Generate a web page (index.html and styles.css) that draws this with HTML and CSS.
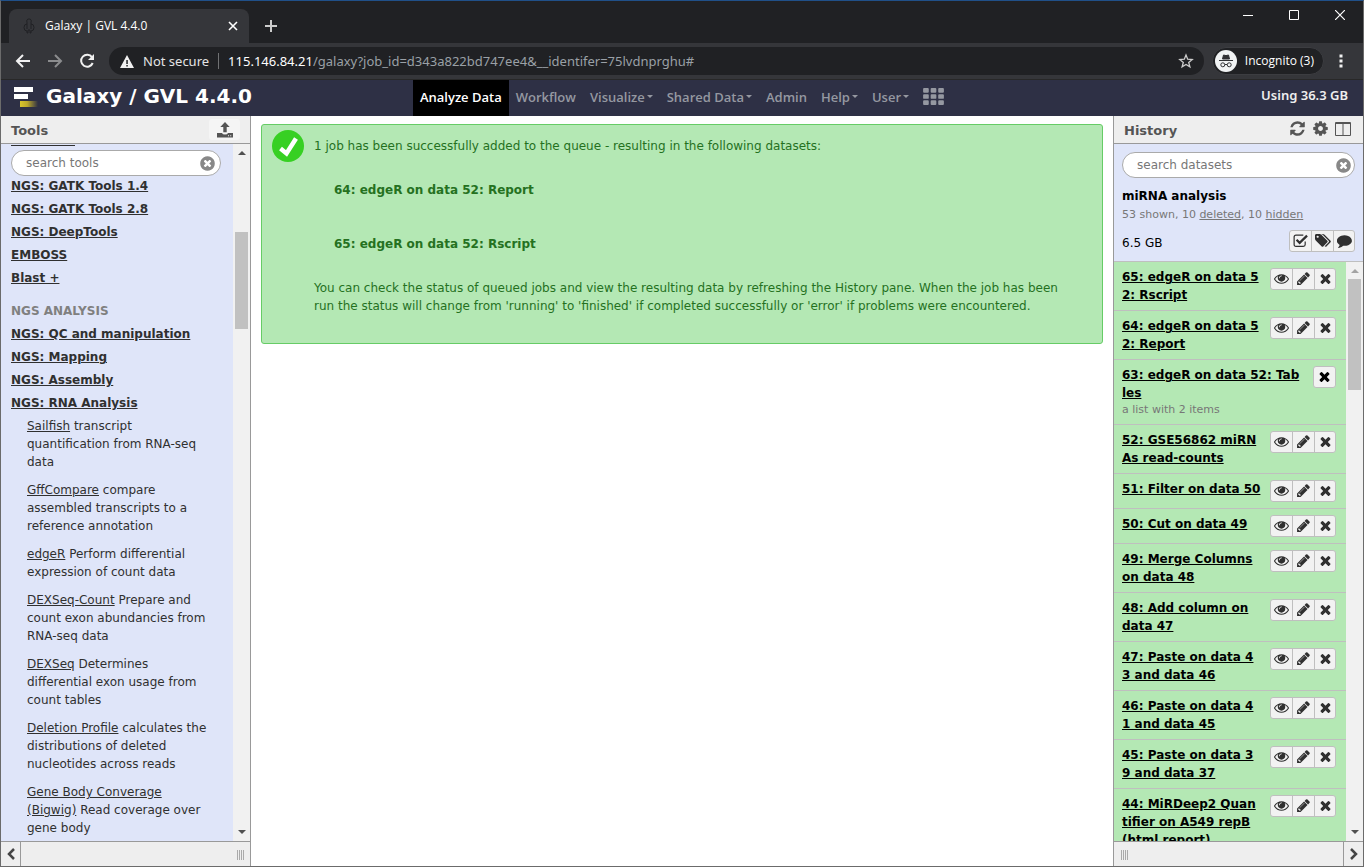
FILE: index.html
```html
<!DOCTYPE html>
<html lang="en">
<head>
<meta charset="utf-8">
<title>Galaxy | GVL 4.4.0</title>
<link rel="stylesheet" href="styles.css">
</head>
<body>
<svg class="defs" aria-hidden="true">
  <symbol id="eye" viewBox="0 0 1792 1792"><path d="M1664 960q-152-236-381-353 61 104 61 225 0 185-131.5 316.5t-316.5 131.5-316.5-131.5-131.5-316.5q0-121 61-225-229 117-381 353 133 205 333.5 326.5t434.5 121.5 434.5-121.5 333.5-326.5zm-720-384q0-20-14-34t-34-14q-125 0-214.5 89.5t-89.5 214.5q0 20 14 34t34 14 34-14 14-34q0-86 61-147t147-61q20 0 34-14t14-34zm848 384q0 34-20 69-140 230-376.5 368.5t-499.5 138.5-499.5-139-376.5-368q-20-35-20-69t20-69q140-229 376.5-368t499.5-139 499.5 139 376.5 368q20 35 20 69z"/></symbol>
  <symbol id="pencil" viewBox="0 0 1792 1792"><path d="M491 1536l91-91-235-235-91 91v107h128v128h107zm523-928q0-22-22-22-10 0-17 7l-542 542q-7 7-7 17 0 22 22 22 10 0 17-7l542-542q7-7 7-17zm-54-192l416 416-832 832h-416v-416zm683 96q0 53-37 90l-166 166-416-416 166-165q36-38 90-38 53 0 91 38l235 234q37 39 37 91z"/></symbol>
  <symbol id="times" viewBox="0 0 1792 1792"><path d="M1490 1322q0 40-28 68l-136 136q-28 28-68 28t-68-28l-294-294-294 294q-28 28-68 28t-68-28l-136-136q-28-28-28-68t28-68l294-294-294-294q-28-28-28-68t28-68l136-136q28-28 68-28t68 28l294 294 294-294q28-28 68-28t68 28l136 136q28 28 28 68t-28 68l-294 294 294 294q28 28 28 68z"/></symbol>
  <symbol id="refresh" viewBox="0 0 1792 1792"><path d="M1639 1056q0 5-1 7-64 268-268 434.5t-478 166.5q-146 0-282.5-55t-243.5-157l-129 129q-19 19-45 19t-45-19-19-45v-448q0-26 19-45t45-19h448q26 0 45 19t19 45-19 45l-137 137q71 66 161 102t187 36q134 0 250-65t186-179q11-17 53-117 8-23 30-23h192q13 0 22.5 9.5t9.5 22.5zm25-800v448q0 26-19 45t-45 19h-448q-26 0-45-19t-19-45 19-45l138-138q-148-137-349-137-134 0-250 65t-186 179q-11 17-53 117-8 23-30 23h-199q-13 0-22.5-9.5t-9.5-22.5v-7q65-268 270-434.5t480-166.5q146 0 284 55.5t245 156.5l130-129q19-19 45-19t45 19 19 45z"/></symbol>
  <symbol id="cog" viewBox="0 0 1792 1792"><path d="M1152 896q0-106-75-181t-181-75-181 75-75 181 75 181 181 75 181-75 75-181zm512-109v222q0 12-8 23t-20 13l-185 28q-19 54-39 91 35 50 107 138 10 12 10 25t-9 23q-27 37-99 108t-94 71q-12 0-26-9l-138-108q-44 23-91 38-16 136-29 186-7 28-36 28h-222q-14 0-24.5-8.5t-11.5-21.5l-28-184q-49-16-90-37l-141 107q-10 9-25 9-14 0-25-11-126-114-165-168-7-10-7-23 0-12 8-23 15-21 51-66.5t54-70.5q-27-50-41-99l-183-27q-13-2-21-12.5t-8-23.5v-222q0-12 8-23t19-13l186-28q14-46 39-92-40-57-107-138-10-12-10-24 0-10 9-23 26-36 98.5-107.5t94.5-71.5q13 0 26 10l138 107q44-23 91-38 16-136 29-186 7-28 36-28h222q14 0 24.5 8.5t11.5 21.5l28 184q49 16 90 37l142-107q9-9 24-9 13 0 25 10 129 119 165 170 7 8 7 22 0 12-8 23-15 21-51 66.5t-54 70.5q26 50 41 98l183 28q13 2 21 12.5t8 23.5z"/></symbol>
  <symbol id="columns" viewBox="0 0 16 16"><path fill-rule="evenodd" d="M1 1h14q1 0 1 1v12q0 1-1 1H1q-1 0-1-1V2q0-1 1-1zM1 3v11h6.500V3zM8.500 3v11H15V3z"/></symbol>
  <symbol id="clear" viewBox="0 0 1792 1792"><path d="M1277 1122q0-26-19-45l-181-181 181-181q19-19 19-45 0-27-19-46l-90-90q-19-19-46-19-26 0-45 19l-181 181-181-181q-19-19-45-19-27 0-46 19l-90 90q-19 19-19 46 0 26 19 45l181 181-181 181q-19 19-19 45 0 27 19 46l90 90q19 19 46 19 26 0 45-19l181-181 181 181q19 19 45 19 27 0 46-19l90-90q19-19 19-46zm387-226q0 209-103 385.5t-279.5 279.5-385.5 103-385.5-103-279.5-279.5-103-385.5 103-385.5 279.5-279.5 385.5-103 385.5 103 279.5 279.5 103 385.5z"/></symbol>
  <symbol id="comment" viewBox="0 0 1792 1792"><path d="M1792 896q0 174-120 321.5t-326 233-450 85.5q-70 0-145-8-198 175-460 242-49 14-114 22-17 2-30.500-9t-17.500-29q-3-13 9-32 7-8 31-34.500t34.500-38 31-39.500 32.500-51 27-59 26-76q-157-89-247.500-220t-90.500-281q0-130 71-248.500t191-204.500 286-136.500 348-50.500q244 0 450 85.500t326 233 120 321.500z"/></symbol>
  <symbol id="tags" viewBox="0 0 1920 1792"><path d="M448 448q0-53-37.500-90.500t-90.500-37.500-90.500 37.500-37.500 90.500 37.500 90.500 90.500 37.500 90.500-37.500 37.500-90.500zm1067 576q0 53-37 90l-491 492q-39 37-91 37-53 0-90-37l-715-716q-38-37-64.500-101t-26.500-117v-416q0-52 38-90t90-38h416q53 0 117 26.500t102 64.500l715 714q37 39 37 91zm384 0q0 53-37 90l-491 492q-39 37-91 37-36 0-59-14t-53-45l470-470q37-37 37-90 0-52-37-91l-715-714q-38-38-102-64.500t-117-26.500h224q53 0 117 26.500t102 64.500l715 714q37 39 37 91z"/></symbol>
  <symbol id="check-box" viewBox="0 0 16 16"><path fill="none" stroke="currentColor" stroke-width="1.300" d="M13 9v3.200q0 2-2 2H3.200q-2 0-2-2V4.300q0-2 2-2H11"/><path fill="none" stroke="currentColor" stroke-width="2.400" d="M3.800 7.200l3.300 3.300L15 2.800"/></symbol>
  <symbol id="upload" viewBox="0 0 16 16"><path fill-rule="evenodd" d="M8 0l4.700 5H9.700v5.300H6.300V5H3.300zM0 11h5q.5 1.500 3 1.500T11 11h5v4.500H0zM11 13.200v1h1v-1zm2.200 0v1h1v-1z"/></symbol>
  <symbol id="th" viewBox="0 0 22 18"><path d="M1 0h4q1 0 1 1v3q0 1-1 1H1Q0 5 0 4V1q0-1 1-1zM9 0h4q1 0 1 1v3q0 1-1 1H9Q8 5 8 4V1q0-1 1-1zM17 0h4q1 0 1 1v3q0 1-1 1h-4q-1 0-1-1V1q0-1 1-1zM1 6.500h4q1 0 1 1v3q0 1-1 1H1q-1 0-1-1v-3q0-1 1-1zM9 6.500h4q1 0 1 1v3q0 1-1 1H9q-1 0-1-1v-3q0-1 1-1zM17 6.500h4q1 0 1 1v3q0 1-1 1h-4q-1 0-1-1v-3q0-1 1-1zM1 13h4q1 0 1 1v3q0 1-1 1H1q-1 0-1-1v-3q0-1 1-1zM9 13h4q1 0 1 1v3q0 1-1 1H9q-1 0-1-1v-3q0-1 1-1zM17 13h4q1 0 1 1v3q0 1-1 1h-4q-1 0-1-1v-3q0-1 1-1z"/></symbol>
</svg>
<div class="window">
  <div class="tabstrip">
    <div class="tab">
      <svg class="favicon" viewBox="0 0 16 16"><path d="M8 1a2 2 0 0 1 2 3v2q3 0 3 3.500T10 13v2H9v-3H7v3H6v-2q-3 0-3-3.500T6 6V4a2 2 0 0 1 2-3zM6 6v5M10 6v5" fill="none" stroke="#202124"/></svg>
      <span class="tab-title">Galaxy | GVL 4.4.0</span>
      <button class="plain" aria-label="Close tab"><svg width="10" height="10" viewBox="0 0 10 10"><path d="M1 1l8 8M9 1L1 9" stroke="#fff" stroke-width="1.600"/></svg></button>
    </div>
    <button class="plain new-tab" aria-label="New tab"><svg width="12" height="12" viewBox="0 0 12 12"><path d="M6 0v12M0 6h12" stroke="#ccc" stroke-width="2"/></svg></button>
    <div class="window-buttons">
      <button class="plain" aria-label="Minimize"><svg width="10" height="10" viewBox="0 0 10 10"><path d="M0 5.500h10" stroke="#fff"/></svg></button>
      <button class="plain" aria-label="Maximize"><svg width="10" height="10" viewBox="0 0 10 10"><path d="M.5.5h9v9h-9z" fill="none" stroke="#fff"/></svg></button>
      <button class="plain" aria-label="Close"><svg width="10" height="10" viewBox="0 0 10 10"><path d="M0 0l10 10M10 0L0 10" stroke="#fff" stroke-width="1.200"/></svg></button>
    </div>
  </div>
  <div class="toolbar">
    <button class="plain" aria-label="Back"><svg width="16" height="16" viewBox="0 0 16 16"><path d="M15 8H2M8 2L2 8l6 6" fill="none" stroke="#f1f1f1" stroke-width="2"/></svg></button>
    <button class="plain" aria-label="Forward"><svg width="16" height="16" viewBox="0 0 16 16"><path d="M1 8h13M8 2l6 6-6 6" fill="none" stroke="#8b8c8e" stroke-width="2"/></svg></button>
    <button class="plain" aria-label="Reload"><svg width="16" height="16" viewBox="0 0 16 16"><path d="M13 4.200A6 6 0 1 0 13.700 10" fill="none" stroke="#f1f1f1" stroke-width="2"/><path d="M15 1v6H9z" fill="#f1f1f1"/></svg></button>
    <div class="address">
      <svg width="14" height="13" viewBox="0 0 14 13"><path d="M7 0l7 13H0zM6.300 5v4h1.500V5zM6.300 10v1.500h1.500V10z" fill="#f1f1f1" fill-rule="evenodd"/></svg>
      <span class="insecure">Not secure</span>
      <span class="url"><b>115.146.84.21</b>/galaxy?job_id=d343a822bd747ee4&amp;__identifer=75lvdnprghu#</span>
      <button class="plain" aria-label="Bookmark"><svg width="16" height="16" viewBox="0 0 16 16"><path d="M8 2l1.700 4.200 4.500.3-3.500 2.900 1.200 4.400L8 11.400l-3.900 2.400 1.200-4.400-3.500-2.900 4.500-.3z" fill="none" stroke="#ccc" stroke-width="1.300"/></svg></button>
    </div>
    <div class="incognito">
      <svg width="22" height="22" viewBox="0 0 22 22"><circle cx="11" cy="11" r="11" fill="#f1f3f4"/><path d="M4 10.500h14M7.500 9l1-4 2.500.6 2.500-.6 1 4z" fill="#303134" stroke="#303134"/><circle cx="7.800" cy="14.800" r="2" fill="none" stroke="#303134"/><circle cx="14.200" cy="14.800" r="2" fill="none" stroke="#303134"/><path d="M10 14.500h2" stroke="#303134"/></svg>
      <span>Incognito (3)</span>
    </div>
    <button class="plain menu" aria-label="Menu"><svg width="4" height="14" viewBox="0 0 4 14"><path d="M.5.5h3v3h-3zM.5 5.500h3v3h-3zM.5 10.500h3v3h-3z" fill="#f1f1f1"/></svg></button>
  </div>

  <header class="masthead">
    <a class="brand" href="#"><svg width="26" height="22" viewBox="0 0 26 22"><defs><linearGradient id="gold"><stop offset="0" stop-color="#d8c52c"/><stop offset=".4" stop-color="#bda92b"/><stop offset="1" stop-color="#2e3045"/></linearGradient></defs><path d="M1 2h19v5H1zM1 9h14v5H1z" fill="#fff"/><path d="M7 16h18v6H7z" fill="url(#gold)"/></svg>Galaxy / GVL 4.4.0</a>
    <nav class="menu-bar">
      <a class="active" href="#">Analyze Data</a><a href="#">Workflow</a><a class="drop" href="#">Visualize</a><a class="drop" href="#">Shared Data</a><a href="#">Admin</a><a class="drop" href="#">Help</a><a class="drop" href="#">User</a><a href="#" aria-label="Apps"><svg width="21" height="17"><use href="#th"/></svg></a>
    </nav>
    <span class="usage">Using 36.3 GB</span>
  </header>

  <div class="columns">
    <aside class="panel tools">
      <div class="panel-head"><h2>Tools</h2><button class="upload" aria-label="Upload"><svg width="16" height="16"><use href="#upload"/></svg></button></div>
      <div class="panel-body">
        <div class="tool-view">
          <div class="search over"><input type="text" placeholder="search tools" aria-label="search tools"><button class="plain" aria-label="Clear"><svg width="17" height="17"><use href="#clear"/></svg></button></div>
          <a class="scrolled" href="#" aria-label="Previous section"></a>
          <div class="tool-list">
            <a class="section" href="#">NGS: GATK Tools 1.4</a>
            <a class="section" href="#">NGS: GATK Tools 2.8</a>
            <a class="section" href="#">NGS: DeepTools</a>
            <a class="section" href="#">EMBOSS</a>
            <a class="section" href="#">Blast +</a>
            <div class="label">NGS ANALYSIS</div>
            <a class="section" href="#">NGS: QC and manipulation</a>
            <a class="section" href="#">NGS: Mapping</a>
            <a class="section" href="#">NGS: Assembly</a>
            <a class="section" href="#">NGS: RNA Analysis</a>
            <p><a href="#">Sailfish</a> transcript<br>quantification from RNA-seq<br>data</p>
            <p><a href="#">GffCompare</a> compare<br>assembled transcripts to a<br>reference annotation</p>
            <p><a href="#">edgeR</a> Perform differential<br>expression of count data</p>
            <p><a href="#">DEXSeq-Count</a> Prepare and<br>count exon abundancies from<br>RNA-seq data</p>
            <p><a href="#">DEXSeq</a> Determines<br>differential exon usage from<br>count tables</p>
            <p><a href="#">Deletion Profile</a> calculates the<br>distributions of deleted<br>nucleotides across reads</p>
            <p><a href="#">Gene Body Converage<br>(Bigwig)</a> Read coverage over<br>gene body</p>
          </div>
        </div>
        <div class="scrollbar"><i class="up"></i><div class="rail"><div class="thumb tools-thumb"></div></div><i class="down"></i></div>
      </div>
      <div class="panel-foot"><button class="collapse" aria-label="Collapse tools"><svg width="10" height="12" viewBox="0 0 10 12"><path d="M8 1L3 6l5 5" fill="none" stroke="#444" stroke-width="2.500"/></svg></button><span class="grip"></span></div>
    </aside>

    <main class="center">
      <div class="done">
        <svg width="32" height="32" viewBox="0 0 32 32"><circle cx="16" cy="16" r="16" fill="#37d023"/><path d="M8.500 18.500l6 5L24 8.500" fill="none" stroke="#fff" stroke-width="4.500"/></svg>
        <div class="done-text">
          <p>1 job has been successfully added to the queue - resulting in the following datasets:</p>
          <b>64: edgeR on data 52: Report</b>
          <b>65: edgeR on data 52: Rscript</b>
          <p>You can check the status of queued jobs and view the resulting data by refreshing the History pane. When the job has been<br>run the status will change from 'running' to 'finished' if completed successfully or 'error' if problems were encountered.</p>
        </div>
      </div>
    </main>

    <aside class="panel history">
      <div class="panel-head"><h2>History</h2><div class="head-icons"><button class="plain" aria-label="Refresh"><svg width="17" height="17"><use href="#refresh"/></svg></button><button class="plain" aria-label="Options"><svg width="17" height="17"><use href="#cog"/></svg></button><button class="plain" aria-label="View all histories"><svg width="16" height="16"><use href="#columns"/></svg></button></div></div>
      <div class="history-info">
        <div class="search"><input type="text" placeholder="search datasets" aria-label="search datasets"><button class="plain" aria-label="Clear"><svg width="17" height="17"><use href="#clear"/></svg></button></div>
        <h3>miRNA analysis</h3>
        <div class="counts">53 shown, 10 <a href="#">deleted</a>, 10 <a href="#">hidden</a></div>
        <div class="size-row"><span>6.5 GB</span><div class="group"><button aria-label="Select"><svg width="15" height="15"><use href="#check-box"/></svg></button><button aria-label="Tags"><svg width="16" height="15"><use href="#tags"/></svg></button><button aria-label="Annotate"><svg width="15" height="15"><use href="#comment"/></svg></button></div></div>
      </div>
      <div class="panel-body">
        <div class="datasets" id="datasets">
          <div class="item"><a href="#">65: edgeR on data 5<br>2: Rscript</a></div>
          <div class="item"><a href="#">64: edgeR on data 5<br>2: Report</a></div>
          <div class="item list"><a href="#">63: edgeR on data 52: Tab<br>les</a><small>a list with 2 items</small></div>
          <div class="item"><a href="#">52: GSE56862 miRN<br>As read-counts</a></div>
          <div class="item"><a href="#">51: Filter on data 50</a></div>
          <div class="item"><a href="#">50: Cut on data 49</a></div>
          <div class="item"><a href="#">49: Merge Columns<br>on data 48</a></div>
          <div class="item"><a href="#">48: Add column on<br>data 47</a></div>
          <div class="item"><a href="#">47: Paste on data 4<br>3 and data 46</a></div>
          <div class="item"><a href="#">46: Paste on data 4<br>1 and data 45</a></div>
          <div class="item"><a href="#">45: Paste on data 3<br>9 and data 37</a></div>
          <div class="item"><a href="#">44: MiRDeep2 Quan<br>tifier on A549 repB<br>(html report)</a></div>
        </div>
        <div class="scrollbar"><i class="up dim"></i><div class="rail"><div class="thumb history-thumb"></div></div><i class="down"></i></div>
      </div>
      <div class="panel-foot"><span class="grip"></span><button class="collapse" aria-label="Collapse history"><svg width="10" height="12" viewBox="0 0 10 12"><path d="M2 1l5 5-5 5" fill="none" stroke="#444" stroke-width="2.500"/></svg></button></div>
    </aside>
  </div>
</div>
<script src="history.js"></script>
</body>
</html>
```
FILE: styles.css
```css
* { box-sizing: border-box; }
body { margin: 0; font: 12px/18px "DejaVu Sans", Verdana, sans-serif; color: #303030; }
a { color: inherit; }
svg { display: block; fill: currentColor; flex: none; }
button { font: inherit; color: inherit; cursor: pointer; }
.defs { display: none; }
.plain { background: none; border: 0; padding: 0; display: flex; align-items: center; justify-content: center; }

.window { height: 100vh; display: flex; flex-direction: column; border: 1px solid #6b6b6b; border-top-color: #205089; overflow: hidden; background: #fff; }

.tabstrip { flex: none; height: 42px; background: #202124; display: flex; padding-left: 8px; color: #fff; }
.tab { width: 240px; height: 34px; margin-top: 8px; padding: 0 11px 0 12px; border-radius: 8px 8px 0 0; background: #35363a; display: flex; align-items: center; gap: 8px; }
.favicon { width: 16px; height: 16px; }
.tab-title { flex: 1; font-family: "Open Sans", sans-serif; }
.new-tab { margin: 8px 0 0 16px; height: 34px; }
.window-buttons { margin-left: auto; display: flex; }
.window-buttons button { width: 46px; height: 28px; }

.toolbar { flex: none; height: 37px; padding: 0 16px 0 14px; border-bottom: 1px solid #282828; background: #35363a; display: flex; align-items: center; gap: 16px; font-family: "Open Sans", sans-serif; color: #fff; }
.address { flex: 1; height: 28px; margin-left: -2px; padding: 0 10px 0 11px; border-radius: 14px; background: #202124; display: flex; align-items: center; gap: 9px; }
.insecure { color: #e4e4e5; padding-right: 9px; border-right: 1px solid #707173; line-height: 16px; font-family: "Noto Sans", sans-serif; font-size: 13px; }
.url { flex: 1; color: #9aa0a6; font-family: "Noto Sans", sans-serif; font-size: 13px; }
.url b { font-weight: 400; color: #fff; }
.incognito { height: 28px; margin: 0 -5px 0 -8px; padding: 0 9px 0 2px; border: 1px solid #3c3d41; border-radius: 14px; background: #202124; display: flex; align-items: center; gap: 8px; }
.menu { width: 12px; }

.masthead { flex: none; height: 36px; background: #2e3045; display: grid; grid-template-columns: 1fr auto 1fr; color: #fff; font-family: "Open Sans", sans-serif; }
.brand { display: flex; align-items: center; gap: 7px; height: 32px; padding-left: 12px; color: #fff; text-decoration: none; font: bold 20px "DejaVu Sans", sans-serif; white-space: nowrap; }
.menu-bar { display: flex; font-size: 13px; font-weight: 600; }
.menu-bar a { padding: 0 7px 3px; display: flex; align-items: center; color: #9598a1; text-decoration: none; }
.menu-bar .active { background: #000; color: #fff; }
.drop::after { content: ""; margin-left: 2px; border: 3px solid transparent; border-top-color: currentColor; border-bottom: 0; }
.usage { justify-self: end; padding: 6px 15px 0 0; font-family: "Noto Sans", sans-serif; font-size: 13px; font-weight: 600; color: #eee; }

.columns { flex: 1; min-height: 0; display: flex; }
.panel { width: 250px; flex: none; display: flex; flex-direction: column; background: #dfe5f9; }
.tools { border-right: 1px solid #999; }
.history { border-left: 1px solid #999; }
.panel-head { flex: none; height: 28px; padding: 0 10px; background: #eee; border-bottom: 1px solid #999; display: flex; align-items: center; justify-content: space-between; color: #555; }
.history .panel-head { padding-right: 12px; }
.panel-head h2 { margin: 0; padding-top: 2px; font-size: 13px; }
.upload { width: 31px; height: 21px; padding: 0; border: 0; border-radius: 3px; background: #f5f5f5; display: flex; align-items: center; justify-content: center; }
.head-icons { display: flex; gap: 6px; align-items: center; padding-bottom: 2px; }
.panel-body { flex: 1; min-height: 0; display: flex; }
.panel-foot { flex: none; height: 25px; background: #eee; border-top: 1px solid #999; display: flex; align-items: center; justify-content: space-between; }
.collapse { width: 20px; height: 24px; padding: 0; border: 0; background: none; display: flex; align-items: center; justify-content: center; }
.tools .collapse { border-right: 1px solid #999; }
.history .collapse { border-left: 1px solid #999; }
.grip { width: 7px; height: 10px; margin: 2px 6px 0 7px; background: repeating-linear-gradient(90deg, #aaa 0 1px, transparent 1px 2px); }

.scrollbar { flex: none; width: 17px; background: #f1f1f1; display: flex; flex-direction: column; align-items: center; justify-content: space-between; padding: 7px 0; }
.scrollbar i { border: 4px solid transparent; }
.scrollbar .up { border-top: 0; border-bottom-color: #505050; }
.scrollbar .down { border-bottom: 0; border-top-color: #505050; }
.scrollbar .dim { border-bottom-color: #a3a3a3; }
.rail { flex: 1; width: 13px; display: flex; flex-direction: column; }
.thumb { background: #c1c1c1; }
.tools-thumb { margin-top: 77px; height: 97px; }
.history-thumb { margin-top: 6px; height: 111px; }

.search { display: flex; align-items: center; height: 26px; padding: 0 4px 0 14px; border: 1px solid #aaa; border-radius: 13px; background: #fff; color: #888; }
.history .search { padding-right: 2px; }
.search input { flex: 1; min-width: 0; padding: 0; border: 0; outline: 0; background: none; font: inherit; }
.search input::placeholder { color: #777; opacity: 1; }
.tool-view { flex: 1; min-width: 0; overflow: hidden; position: relative; }
.over { position: absolute; top: 6px; left: 10px; right: 12px; }
.scrolled { display: block; width: 64px; height: 2px; margin-left: 10px; border-bottom: 1px solid #303030; }
.tool-list { padding: 31px 0 0 10px; white-space: nowrap; }
.section { display: table; margin-bottom: 5px; font-weight: bold; }
.label { margin: 15px 0 5px; font-weight: bold; color: #808080; }
.tool-list p { margin: 0 0 10px 16px; }

.center { flex: 1; min-width: 0; padding: 8px 10px; }
.done { min-height: 220px; padding: 5px 10px; border: 1px solid #66cc66; border-radius: 3px; background: #b4e8b4; color: #25711f; display: flex; gap: 10px; }
.done-text { padding: 7px 0 22px; flex: 1; min-width: 0; display: flex; flex-direction: column; }
.done-text p { margin: 0; }
.done-text b { margin: 26px 0 10px 20px; }
.done-text b + p { margin-top: 16px; }

.history-info { flex: none; padding: 8px 8px 9px; border-bottom: 1px solid #bfbfbf; }
.history-info h3 { margin: 9px 0 0; font-size: 12px; line-height: 18px; color: #000; }
.counts { padding-top: 1px; font-size: 11px; color: #777; }
.size-row { display: flex; justify-content: space-between; align-items: center; margin-top: 6px; color: #000; }
.size-row span { padding-top: 3px; }
.group { display: flex; height: 22px; border: 1px solid #bfbfbf; border-radius: 3px; background: #f2f2f2; color: #303030; overflow: hidden; }
.group button { width: 21px; padding: 0 0 1px; border: 0; background: none; display: flex; align-items: center; justify-content: center; }
.group button + button { width: 22px; border-left: 1px solid #bfbfbf; }
.group button + button:last-child { width: 21px; }
.datasets { flex: 1; min-width: 0; overflow: hidden; background: #b4e8b4; }
.item { display: grid; grid-template-columns: 1fr auto; align-items: start; padding: 6px 10px 6px 8px; border-bottom: 1px solid #bfbfbf; white-space: nowrap; }
.item > a { font-weight: bold; color: #000; min-width: 0; }
.item .group { grid-column: 2; grid-row: 1; }
.list .group { color: #000; }
.item small { font-size: 11px; line-height: 16px; color: #777; }
```
FILE: history.js
```js
const actions = [["eye", "View data"], ["pencil", "Edit attributes"], ["times", "Delete"]];
for (const item of document.querySelectorAll("#datasets .item")) {
  const group = document.createElement("div");
  group.className = "group";
  const shown = item.classList.contains("list") ? actions.slice(2) : actions;
  group.innerHTML = shown.map(([icon, label]) =>
    `<button aria-label="${label}"><svg width="15" height="15"><use href="#${icon}"/></svg></button>`).join("");
  item.append(group);
}
```
